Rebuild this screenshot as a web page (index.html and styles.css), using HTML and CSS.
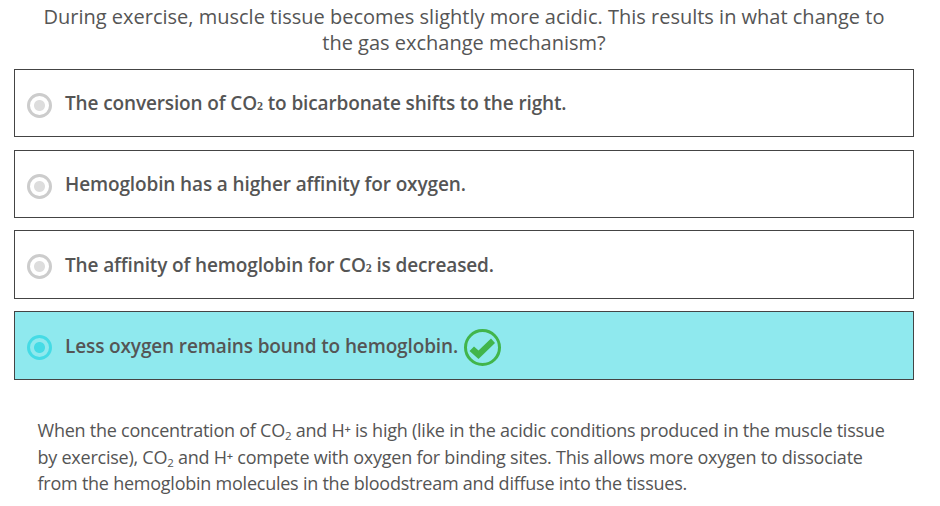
FILE: index.html
```html
<!DOCTYPE html>
<html lang="en">
<head>
    <meta charset="UTF-8">
    <meta name="viewport" content="width=device-width, initial-scale=1.0">
    <title>Quiz</title>
    <link rel="stylesheet" href="styles.css">
</head>
<body>
    <h1 class="question">During exercise, muscle tissue becomes slightly more acidic. This results in what change to<br>the gas exchange mechanism?</h1>
    <div class="answers">
        <div class="answer">
            <span class="radio"></span>
            <p>The conversion of CO<span class="small-two">2</span> to bicarbonate shifts to the right.</p>
        </div>
        <div class="answer">
            <span class="radio"></span>
            <p>Hemoglobin has a higher affinity for oxygen.</p>
        </div>
        <div class="answer tall">
            <span class="radio"></span>
            <p>The affinity of hemoglobin for CO<span class="small-two">2</span> is decreased.</p>
        </div>
        <div class="answer tall selected">
            <span class="radio"></span>
            <p>Less oxygen remains bound to hemoglobin.</p>
            <svg class="check" viewBox="0 0 38 38">
                <circle cx="18.5" cy="18.5" r="17" fill="none" stroke="#41b54b" stroke-width="3"/>
                <path d="M5.5 22 L10 17.5 L14.5 21.5 L27 9.5 L31 14 L14.5 30 Z" fill="#41b54b"/>
            </svg>
        </div>
    </div>
    <p class="explanation">When the concentration of CO<sub>2</sub> and H<sup>+</sup> is high (like in the acidic conditions produced in the muscle tissue<br>by exercise), CO<sub>2</sub> and H<sup>+</sup> compete with oxygen for binding sites. This allows more oxygen to dissociate<br>from the hemoglobin molecules in the bloodstream and diffuse into the tissues.</p>
</body>
</html>
```
FILE: styles.css
```css
body {
    margin: 0;
    padding: 4px 26px 0 14px;
    background-color: #fff;
    color: #555;
    font-family: "Open Sans", sans-serif;
    overflow: hidden;
}
.question {
    margin: 0 0 13px;
    font-size: 20px;
    font-weight: 400;
    line-height: 26px;
    text-align: center;
    white-space: nowrap;
}
.answers {
    display: flex;
    flex-direction: column;
}
.answer {
    display: flex;
    align-items: center;
    box-sizing: border-box;
    height: 68px;
    margin-bottom: 13px;
    padding-left: 12px;
    border: 1px solid #444;
    font-size: 19px;
    font-weight: 600;
    letter-spacing: -0.13px;
}
.answer:nth-child(2), .answer:nth-child(3) {
    margin-bottom: 12px;
}
.tall {
    height: 69px;
}
.answer p {
    margin: 0 0 0 13px;
    white-space: nowrap;
}
.small-two {
    font-family: "Liberation Serif", serif;
    font-size: 12px;
    font-weight: 700;
}
.radio {
    box-sizing: border-box;
    width: 25px;
    height: 25px;
    margin-top: 5px;
    border: 3px solid #ccc;
    border-radius: 50%;
    background: radial-gradient(circle, #ddd 5px, transparent 6px);
}
.tall .radio {
    margin-top: 3px;
}
.selected {
    background-color: #8fe9ee;
}
.selected .radio {
    border-color: #45dbe5;
    background: radial-gradient(circle, #45dbe5 5px, transparent 6px);
}
.check {
    width: 38px;
    height: 38px;
    margin: 4px 0 0 6px;
}
sub, sup {
    font-size: 11.5px;
    line-height: 0;
}
sub {
    vertical-align: -3px;
}
sup {
    font-size: 11px;
    font-weight: 600;
    vertical-align: 4px;
}
.explanation {
    margin: 24px 0 0 23.5px;
    font-size: 18px;
    letter-spacing: -0.24px;
    line-height: 26.5px;
    white-space: nowrap;
}
```
